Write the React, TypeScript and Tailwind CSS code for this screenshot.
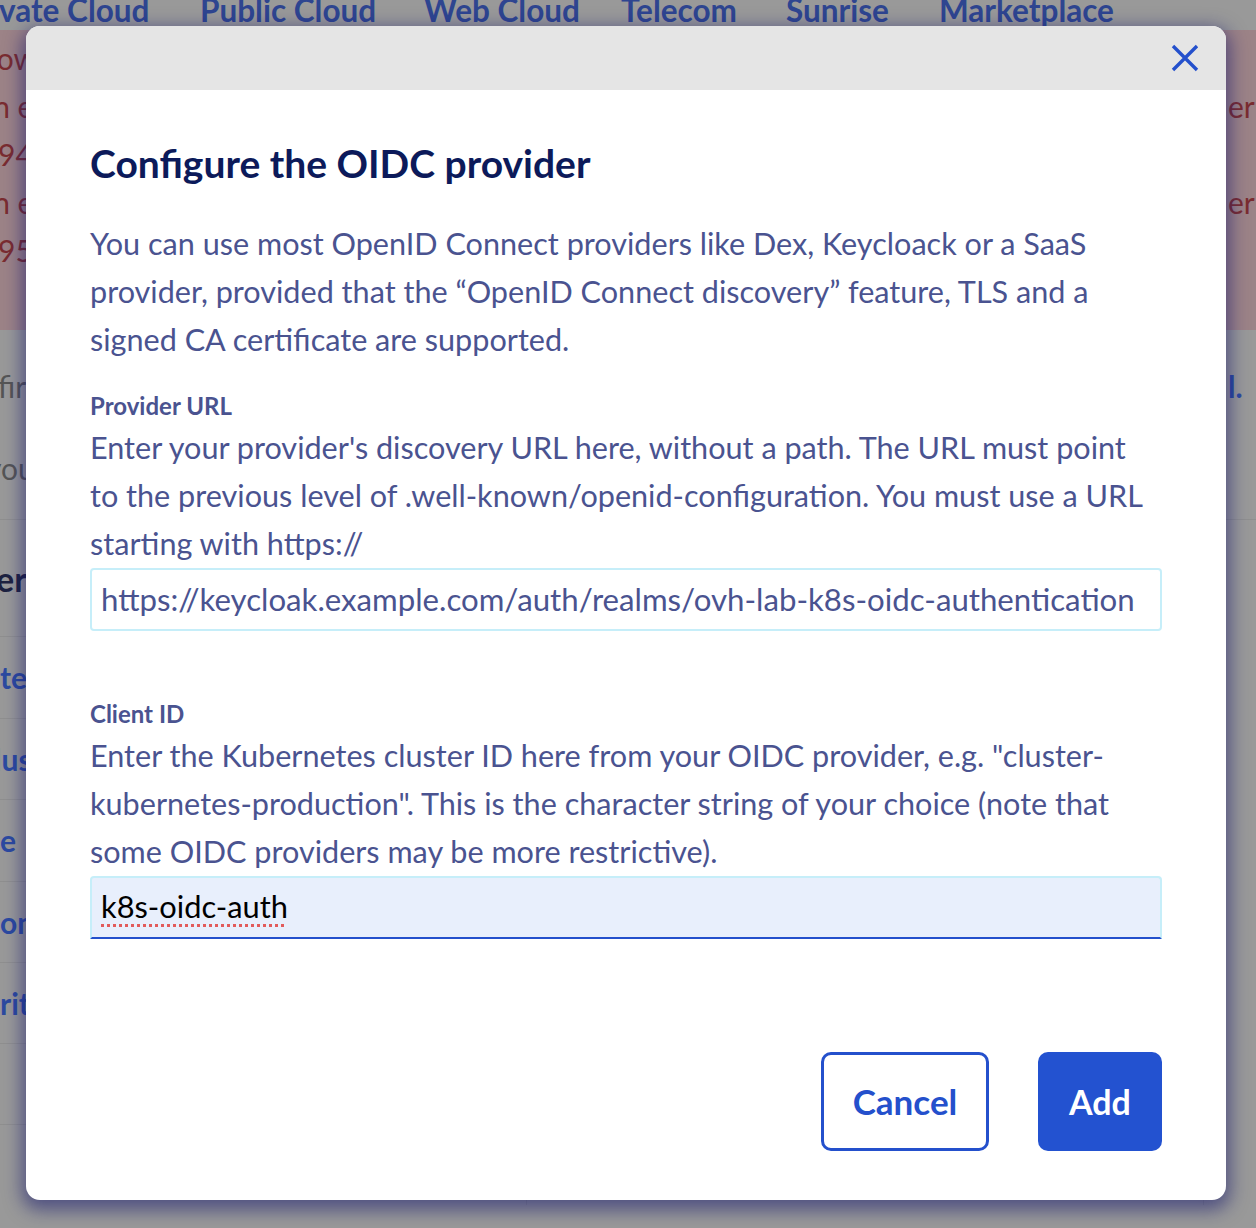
import React from "react";

const navItems = [
  { t: "Private Cloud", w: "w-[240px]" },
  { t: "Public Cloud", w: "w-[224px]" },
  { t: "Web Cloud", w: "w-[197px]" },
  { t: "Telecom", w: "w-[165px]" },
  { t: "Sunrise", w: "w-[153px]" },
  { t: "Marketplace", w: "w-[200px]" },
];

function AlertRow({ left, right, ml }: { left: string; right?: string; ml: string }) {
  return (
    <div className="flex whitespace-nowrap">
      <div className="w-[1228px] shrink-0 overflow-hidden">
        <span className={"block " + ml}>{left}</span>
      </div>
      <span className="shrink-0">{right}</span>
    </div>
  );
}

function Background() {
  return (
    <div className="flex flex-col w-[1256px]">
      {/* top nav */}
      <div className="h-[30px] overflow-hidden">
        <div className="flex ml-[-40px] mt-[-6px] text-[31.5px] leading-[32px] font-bold text-[#2e4590] whitespace-nowrap">
          {navItems.map((n) => (
            <span key={n.t} className={n.w + " shrink-0"}>{n.t}</span>
          ))}
        </div>
      </div>
      {/* alert */}
      <div className="h-[300px] bg-[#9c8387] text-[#7a2c30] text-[30px] leading-[48px] pt-[4px] flex flex-col">
        <AlertRow left="now" ml="ml-[-20px]" />
        <AlertRow left="in error" right="er Upgrade" ml="ml-[-14px]" />
        <AlertRow left="94" ml="ml-[-2px]" />
        <AlertRow left="in error" right="er Upgrade" ml="ml-[-14px]" />
        <AlertRow left="95" ml="ml-[-2px]" />
      </div>
      {/* gray content */}
      <div className="flex flex-col text-[30px]">
        <div className="h-[190px] flex flex-col pt-[32px] border-b border-[#8f8f8f]">
          <div className="flex leading-[48px] whitespace-nowrap">
            <div className="w-[1228px] shrink-0">
              <span className="text-[#555] ml-[-2px] block">fir</span>
            </div>
            <span className="text-[#2c4aa0] font-bold shrink-0">l.</span>
          </div>
          <div className="leading-[48px] mt-[34px] text-[#555] ml-[-14px]">you</div>
        </div>
        <div className="flex">
          <div className="w-[527px] flex flex-col border-r border-[#8f8f8f]">
            <div className="h-[117px] border-b border-[#8f8f8f] flex items-center text-[34px] font-bold text-[#1d2240] ml-[-4px]">er</div>
            <div className="h-[82px] border-b border-[#8f8f8f] flex items-center font-bold text-[#2c4aa0]">te</div>
            <div className="h-[81px] border-b border-[#8f8f8f] flex items-center font-bold text-[#2c4aa0] ml-[-6px]">lus</div>
            <div className="h-[82px] border-b border-[#8f8f8f] flex items-center font-bold text-[#2c4aa0]">e</div>
            <div className="h-[81px] border-b border-[#8f8f8f] flex items-center font-bold text-[#2c4aa0]">on</div>
            <div className="h-[81px] border-b border-[#8f8f8f] flex items-center font-bold text-[#2c4aa0]">rit</div>
            <div className="h-[81px] border-b border-[#8f8f8f]"></div>
            <div className="h-[80px]"></div>
          </div>
          <div className="w-[677px] flex flex-col justify-end border-r border-[#8f8f8f]">
            <div className="h-[7px] ml-[32px] border-t border-[#8f8f8f]"></div>
          </div>
        </div>
      </div>
    </div>
  );
}

function Modal() {
  return (
    <div className="absolute left-[26px] top-[26px] w-[1200px] h-[1174px] bg-white rounded-[14px] overflow-hidden shadow-[0_6px_18px_4px_rgba(20,22,110,0.55)] flex flex-col">
      <div className="h-[64px] bg-[#e5e5e5] flex items-center justify-end pr-[27px] shrink-0">
        <svg width="28" height="28" viewBox="0 0 28 28" fill="none">
          <path d="M2 2 L26 26 M26 2 L2 26" stroke="#2450cc" strokeWidth="3.4" strokeLinecap="butt" />
        </svg>
      </div>
      <div className="flex flex-col px-[64px] pt-[49px]">
        <h1 className="text-[39px] leading-[48px] font-bold text-[#0c1a5a] whitespace-nowrap">Configure the OIDC provider</h1>
        <p className="mt-[33px] text-[30.6px] leading-[48px] text-[#4a5390] whitespace-nowrap">
          You can use most OpenID Connect providers like Dex, Keycloack or a SaaS<br />
          provider, provided that the “OpenID Connect discovery” feature, TLS and a<br />
          signed CA certificate are supported.
        </p>
        <div className="mt-[25px] text-[24px] leading-[34px] font-bold text-[#4a5390]">Provider URL</div>
        <p className="mt-[1px] text-[30.6px] leading-[48px] text-[#4a5390] whitespace-nowrap">
          Enter your provider's discovery URL here, without a path. The URL must point<br />
          to the previous level of .well-known/openid-configuration. You must use a URL<br />
          starting with https://
        </p>
        <div className="h-[63px] border-2 border-[#c6eef9] rounded-[4px] flex items-center px-[9px] text-[31.2px] text-[#4a5390] whitespace-nowrap overflow-hidden">
          https://keycloak.example.com/auth/realms/ovh-lab-k8s-oidc-authentication
        </div>
        <div className="mt-[66px] text-[24px] leading-[34px] font-bold text-[#4a5390]">Client ID</div>
        <p className="mt-[1px] text-[30.6px] leading-[48px] text-[#4a5390] whitespace-nowrap">
          Enter the Kubernetes cluster ID here from your OIDC provider, e.g. "cluster-<br />
          kubernetes-production". This is the character string of your choice (note that<br />
          some OIDC providers may be more restrictive).
        </p>
        <div className="h-[63px] bg-[#e8effc] border-2 border-[#c6eef9] border-b-[#2450cc] rounded-t-[4px] flex items-center px-[9px] text-[30.8px] text-black whitespace-nowrap">
          <span className="underline decoration-dotted decoration-[#e25b5b] decoration-[3px] underline-offset-[6px]">k8s-oidc-auth</span>
        </div>
        <div className="mt-[113px] flex justify-end gap-[49px]">
          <button className="w-[168px] h-[99px] border-[3px] border-[#2450cc] rounded-[10px] text-[35px] font-bold text-[#2450cc] bg-white">Cancel</button>
          <button className="w-[124px] h-[99px] rounded-[10px] text-[34px] font-bold text-white bg-[#2352d0]">Add</button>
        </div>
      </div>
    </div>
  );
}

export default function App() {
  return (
    <div className="relative w-[1256px] h-[1228px] overflow-hidden bg-[#999999] font-[family-name:Lato,sans-serif]">
      <Background />
      <Modal />
    </div>
  );
}
